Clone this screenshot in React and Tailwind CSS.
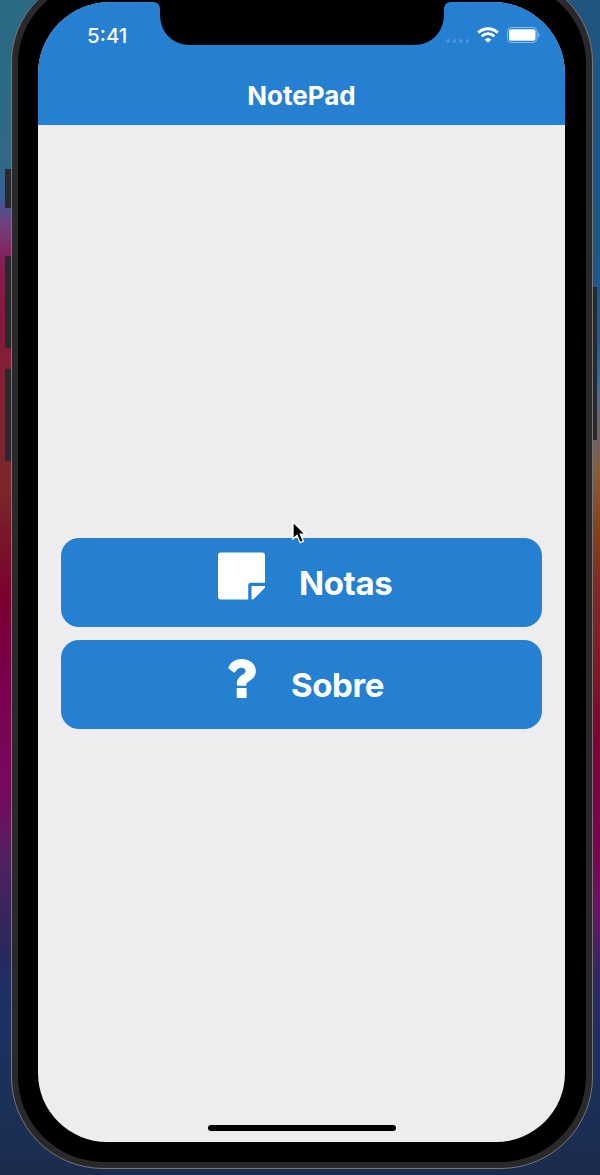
import React from "react";
import { FaStickyNote } from "react-icons/fa";

function QuestionMark() {
  return (
    <svg className="h-[39px] w-7" viewBox="0 0 28 39" fill="#fff">
      <path d="M.6 8C3.2 2.8 7.6 0 13.6 0C21.5 0 27.8 4.8 27.8 12C27.8 17.4 24.6 20 21.8 21.7C19.4 23.1 18.4 24 18.4 25.4C18.4 26.3 17.9 26.8 17.1 26.8H10.1C9.3 26.8 8.8 26.3 8.8 25.4C8.8 20.4 11 17.9 14.4 15.8C16.6 14.5 17.6 13.6 17.6 12C17.6 9.9 15.8 8.7 13.4 8.7C10.8 8.7 9.4 10 7.2 12.9C6.7 13.5 6 13.6 5.4 13.2L.7 9.6C.2 9.2.2 8.7.6 8Z" />
      <rect x="8.7" y="29" width="9.9" height="10" rx="1" />
    </svg>
  );
}

function WifiSignal() {
  return (
    <svg className="h-4 w-[22px]" viewBox="0 0 22 16" fill="none" stroke="#fff" strokeWidth="3">
      <path d="M1.2 5.6C6.9 .3 15.1 .3 20.8 5.6" />
      <path d="M4.7 9.3C8.5 5.9 13.5 5.9 17.3 9.3" strokeWidth="2.8" />
      <path d="M7.6 12.4Q11 9.4 14.4 12.4L11 15.8Z" fill="#fff" stroke="none" />
    </svg>
  );
}

function StatusBar() {
  return (
    <div className="flex h-[68px] items-start justify-between pt-[24px] pl-[49px] pr-[25px]">
      <span className="text-[20.5px] leading-[20px] font-medium">5:41</span>
      <div className="mt-px flex items-center">
        <div className="mt-3 mr-[8px] flex gap-[3px]">
          <i className="size-[3.5px] rounded-full bg-[#4a93e4]" />
          <i className="size-[3.5px] rounded-full bg-[#4a93e4]" />
          <i className="size-[3.5px] rounded-full bg-[#4a93e4]" />
          <i className="size-[3.5px] rounded-full bg-[#4a93e4]" />
        </div>
        <WifiSignal />
        <svg className="ml-2 h-4 w-[33px]" viewBox="0 0 33 16">
          <rect x=".5" y=".5" width="29.5" height="15" rx="4" fill="none" stroke="#8fbcec" />
          <rect x="2" y="2.3" width="26.5" height="11.4" rx="2" fill="#fff" />
          <path d="M31.2 5.5Q34 8 31.2 10.5Z" fill="#8fbcec" />
        </svg>
      </div>
    </div>
  );
}

export default function App() {
  return (
    <div className="relative h-[1175px] w-[600px] overflow-hidden font-['Inter',sans-serif] text-white">
      <div className="grid h-full grid-cols-2">
        <div className="bg-[linear-gradient(to_bottom,#296a83_0px,#306985_155px,#356196_195px,#723e7c_225px,#851d50_265px,#85183d_330px,#842135_370px,#7a272c_490px,#78152a_540px,#7b0030_600px,#7a0050_690px,#780a5b_790px,#51205f_860px,#2d275c_940px,#1b3062_1000px,#1b3159_1100px,#1b2b4c_1175px)]" />
        <div className="bg-[linear-gradient(to_bottom,#20557f_0px,#1e5688_250px,#1f5d96_340px,#3f7097_390px,#6c6370_420px,#82603f_470px,#86421f_530px,#802c24_580px,#7d1724_680px,#7b0436_740px,#7a0047_800px,#7a0557_860px,#6c1460_905px,#4a215d_945px,#2c2a60_990px,#1b3160_1050px,#1b2b4c_1175px)]" />
      </div>

      {/* Side buttons */}
      <div className="absolute left-[5px] top-[169px] h-[39px] w-[7px] bg-[#29282b]" />
      <div className="absolute left-[5px] top-[256px] h-[92px] w-[7px] bg-[#29282b]" />
      <div className="absolute left-[5px] top-[369px] h-[92px] w-[7px] bg-[#29282b]" />
      <div className="absolute left-[592px] top-[287px] h-[153px] w-[5px] bg-[#29282b]" />

      {/* Phone */}
      <div className="absolute left-[11px] top-[-25px] flex h-[1194px] w-[582px] rounded-t-[87px] rounded-b-[92px] border border-[#77777a] bg-[#29282b] p-1.5">
        <div className="flex flex-1 rounded-t-[81px] rounded-b-[86px] bg-black pt-5 pr-[21px] pb-5 pl-5">
          <main className="flex flex-1 flex-col overflow-hidden rounded-t-[72px] rounded-b-[69px] bg-[#eeecef]">
            <header className="h-[123px] shrink-0 bg-[#2580d2]">
              <StatusBar />
              <h1 className="text-center text-[26px] leading-[51px] font-[650]">NotePad</h1>
            </header>
            <section className="flex flex-1 flex-col gap-[13px] pt-[413px] pl-[23px]">
              <button className="flex h-[89px] w-[481px] rounded-[18px] bg-[#2580d2] pl-[157px]">
                <FaStickyNote className="mt-[11px] h-[54px] w-[47px]" />
                <span className="ml-[34px] text-[33px] leading-[91px] font-bold tracking-[-0.4px]">Notas</span>
              </button>
              <button className="flex h-[89px] w-[481px] rounded-[18px] bg-[#2580d2] pl-[167px]">
                <span className="mt-[19px]"><QuestionMark /></span>
                <span className="ml-[35px] text-[33px] leading-[91px] font-bold tracking-[-0.4px]">Sobre</span>
              </button>
            </section>
            <div className="mb-[11px] ml-[170px] h-[6px] w-[188px] rounded-full bg-black" />
          </main>
        </div>
      </div>

      {/* Notch */}
      <svg className="absolute left-[150px] top-0 h-[46px] w-[304px]" viewBox="0 0 304 46">
        <path d="M0 0H304V2H301Q294 2 294 10V14C294 32 282 45 263 45H41C22 45 10 32 10 14V10Q10 2 3 2H0Z" />
      </svg>

      {/* Pointer */}
      <svg className="absolute left-[291px] top-[520px] h-[25px] w-[16px]" viewBox="0 0 16 25">
        <path d="M2 2V19L6 15.3L9.2 22.6L12.4 21.2L9.3 14.2H14.4Z" fill="#000" stroke="#fff" strokeWidth="1.3" />
      </svg>
    </div>
  );
}
